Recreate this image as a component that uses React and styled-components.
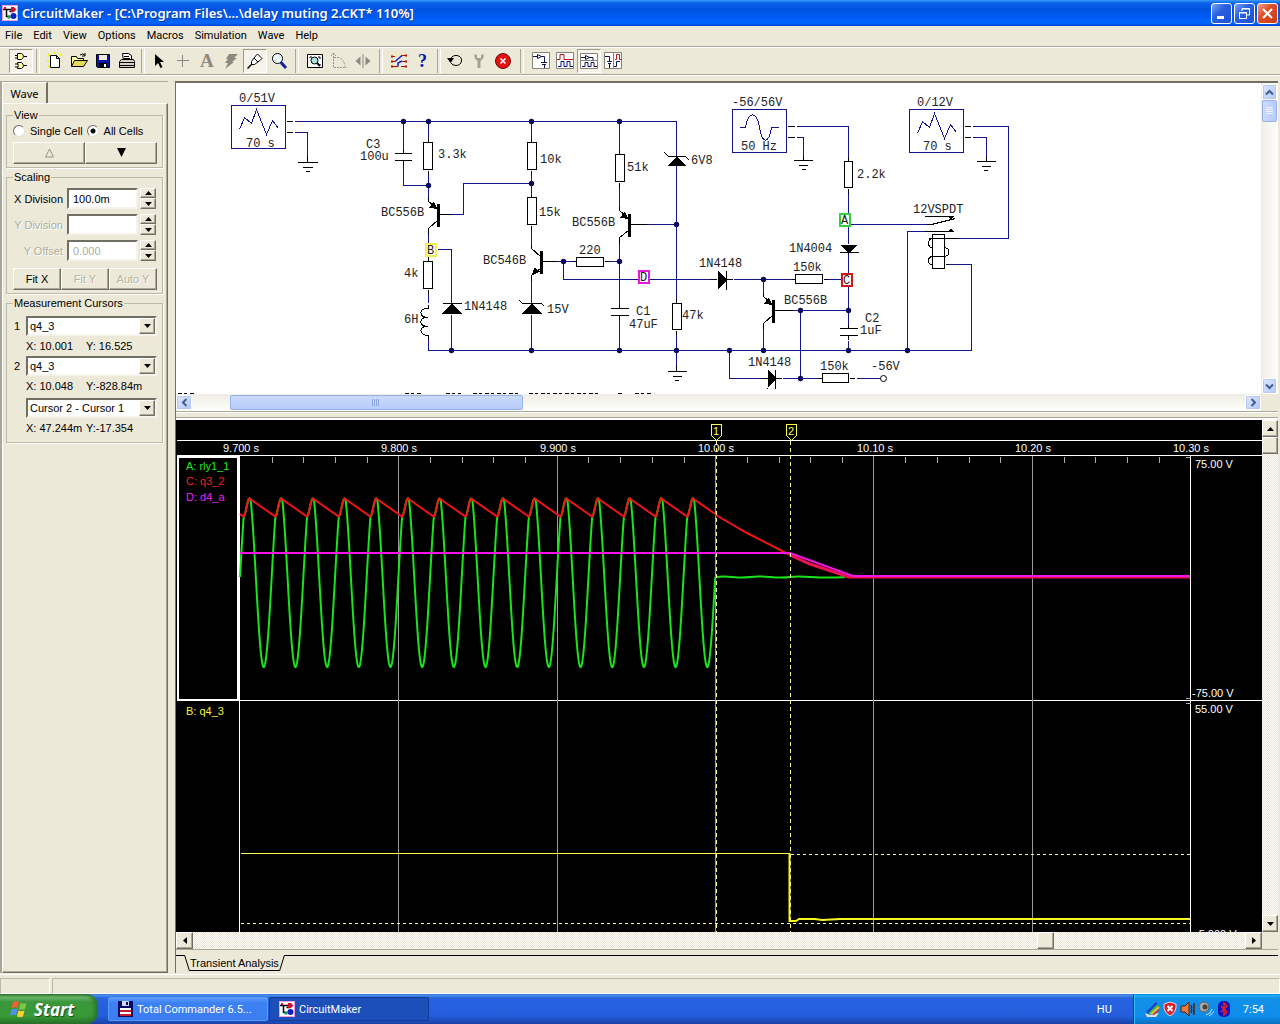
import React, { useState } from 'react';
import styled, { createGlobalStyle, css } from 'styled-components';

const GlobalStyle = createGlobalStyle`
    * {
        box-sizing: border-box;
    }
    body {
        margin: 0;
        background: #ece9d8;
        font-family: "Liberation Sans", Arial, sans-serif;
        font-size: 11px;
        color: #000;
    }
    button, input, select {
        font: inherit;
        color: inherit;
        margin: 0;
        padding: 0;
        border-radius: 0;
    }
    svg {
        display: block;
    }
`;

const titleFont = '"Noto Sans", "Open Sans", sans-serif';
const uiFont = 'Roboto, "Noto Sans", sans-serif';

const raised = css`
    border: 1px solid;
    border-color: #fff #716f64 #716f64 #fff;
    box-shadow: inset -1px -1px #aca899;
    background: #ece9d8;
`;

const Window = styled.div`
    min-height: 100vh;
    display: flex;
    flex-direction: column;
    overflow: hidden;
`;

const TitleBar = styled.header`
    height: 26px;
    display: flex;
    align-items: center;
    gap: 2px;
    padding: 0 2px 0 2px;
    background: linear-gradient(#3c9bff 0, #0a62ea 3px, #0053e1 9px, #005cf5 17px, #0066ff 23px, #0043cf 26px);
`;

const Title = styled.h1`
    flex: 1;
    margin: 0 0 0 2px;
    font-family: ${titleFont};
    font-size: 13px;
    font-weight: 600;
    line-height: 24px;
    white-space: nowrap;
    color: #fff;
    text-shadow: 1px 1px #0b3a9c;
`;

const CaptionButton = styled.button`
    width: 21px;
    height: 21px;
    display: grid;
    place-items: center;
    border: 1px solid #fff;
    border-radius: 3px;
    background: ${props => props.$close
        ? 'linear-gradient(135deg, #f0a088, #e0502a 40%, #c83c14)'
        : 'linear-gradient(135deg, #7ba6f5, #2a60e0 40%, #1c50d0)'};
`;

const MenuBar = styled.nav`
    height: 20px;
    display: flex;
    gap: 11px;
    padding-left: 5px;
    font-family: ${uiFont};
    line-height: 18px;
`;

const MenuItem = styled.button`
    border: 0;
    background: none;
    line-height: 18px;
`;

const ToolBar = styled.div`
    height: 30px;
    display: flex;
    align-items: center;
    padding-left: 9px;
    border-top: 1px solid #aca899;
    border-bottom: 1px solid #fff;
    box-shadow: inset 0 1px #fff, inset 0 -1px #aca899;
`;

const ToolButton = styled.button`
    width: 24px;
    height: 24px;
    display: grid;
    place-items: center;
    border: 1px solid transparent;
    background: none;
    ${props => props.$pressed && css`
        border-color: #9d9a8c #fff #fff #9d9a8c;
        background: #f5f3ea;
    `}
`;

const Separator = styled.span`
    width: ${props => props.$w}px;
    height: 24px;
    display: flex;
    justify-content: center;
    &::before {
        content: "";
        width: 2px;
        border-left: 1px solid #aca899;
        border-right: 1px solid #fff;
    }
`;

const Main = styled.main`
    flex: 1;
    display: flex;
    gap: 7px;
    padding: 5px 2px 1px 0;
`;

const SideBar = styled.aside`
    flex: 0 0 168px;
    min-width: 0;
    display: flex;
    flex-direction: column;
    border-top: 1px solid #aca899;
    border-left: 2px solid #aca899;
`;

const SideTab = styled.button`
    width: 46px;
    height: 21px;
    border: 0;
    border-top: 1px solid #fff;
    border-left: 1px solid #fff;
    border-right: 2px solid #716f64;
    background: none;
    font-family: ${titleFont};
`;

const SidePanel = styled.div`
    flex: 1;
    display: flex;
    flex-direction: column;
    gap: 3px;
    padding: 5px 4px 0 3px;
    border: 1px solid;
    border-color: #fff #716f64 #716f64 #fff;
    box-shadow: inset -1px -1px #aca899;
`;

const Group = styled.fieldset`
    margin: 0;
    min-width: 0;
    padding: ${props => props.$top}px 5px 4px 6px;
    border: 1px solid #bdb9a8;
    box-shadow: 1px 1px #fff;
`;

const Legend = styled.legend`
    padding: 0 1px;
    line-height: 13px;
`;

const Row = styled.div`
    display: flex;
    align-items: center;
    height: ${props => props.$h || 21}px;
    margin-bottom: ${props => props.$after || 0}px;
`;

const RadioLabel = styled.label`
    display: flex;
    align-items: center;
    gap: 5px;
    margin-right: 4px;
    white-space: nowrap;
`;

const Radio = styled.input`
    appearance: none;
    flex: none;
    width: 12px;
    height: 12px;
    border-radius: 50%;
    border: 1px solid;
    border-color: #716f64 #e4e1d2 #e4e1d2 #716f64;
    background: #fff;
    &:checked {
        background: radial-gradient(#000 2px, #fff 3px);
    }
`;

const PushButton = styled.button`
    ${raised}
    flex: 1;
    height: 22px;
    line-height: 20px;
    display: grid;
    place-items: center;
    &:disabled {
        color: #b5b2a2;
        text-shadow: 1px 1px #fff;
    }
`;

const FieldLabel = styled.label`
    width: 50px;
    margin-right: 4px;
    display: flex;
    justify-content: flex-end;
    color: ${props => (props.$off ? '#b0ad9d' : '#000')};
    text-shadow: ${props => (props.$off ? '1px 1px #fff' : 'none')};
    white-space: nowrap;
`;

const TextBox = styled.input`
    width: 71px;
    height: 21px;
    padding-left: 4px;
    border: 2px solid;
    border-color: #716f64 #f6f4ea #f6f4ea #716f64;
    background: #fff;
    &:disabled {
        color: #b0ad9d;
    }
`;

const Spin = styled.div`
    width: 16px;
    margin-left: 2px;
    display: grid;
    grid-template-rows: 10px 11px;
`;

const SpinButton = styled.button`
    ${raised}
    display: grid;
    place-items: center;
`;

const Combo = styled.div`
    flex: 1;
    height: 20px;
    display: flex;
    border: 2px solid;
    border-color: #716f64 #f6f4ea #f6f4ea #716f64;
    background: #fff;
`;

const Select = styled.select`
    appearance: none;
    flex: 1;
    min-width: 0;
    padding-left: 2px;
    border: 0;
    background: #fff;
`;

const ComboArrow = styled.span`
    ${raised}
    width: 16px;
    display: grid;
    place-items: center;
`;

const CursorNo = styled.label`
    width: 13px;
    padding-left: 1px;
`;

const Reading = styled.span`
    width: ${props => props.$w}px;
    white-space: pre;
`;

const Work = styled.section`
    flex: 1;
    min-width: 0;
    display: flex;
    flex-direction: column;
    border-left: 1px solid #716f64;
`;

const SchematicPane = styled.div`
    display: grid;
    grid-template-columns: minmax(0, 1fr) 17px;
    grid-template-rows: 311px 17px;
    border-top: 2px solid #716f64;
    border-bottom: 1px solid #aca899;
    box-shadow: 0 1px #fff;
    margin-bottom: 5px;
`;

const Sheet = styled.div`
    overflow: hidden;
    background: #fff;
`;

const XpTrack = styled.div`
    display: flex;
    flex-direction: ${props => (props.$vertical ? 'column' : 'row')};
    padding: ${props => (props.$vertical ? '1px 1px 0 1px' : '1px 0 1px 0')};
    background: ${props => (props.$vertical
        ? 'linear-gradient(90deg, #eeede5, #fefefb)'
        : 'linear-gradient(#eeede5, #fefefb)')};
`;

const XpButton = styled.button`
    flex: none;
    width: ${props => (props.$vertical ? 15 : 16)}px;
    height: ${props => (props.$vertical ? 16 : 15)}px;
    display: grid;
    place-items: center;
    border: 1px solid #fff;
    border-radius: 2px;
    outline: 1px solid #b8c8f0;
    outline-offset: -2px;
    background: linear-gradient(135deg, #dce6fe, #b4c8f8);
`;

const XpThumb = styled.div`
    flex: none;
    width: ${props => (props.$vertical ? '15px' : props.$size)};
    height: ${props => (props.$vertical ? props.$size : '15px')};
    display: grid;
    place-items: center;
    border: 1px solid #98b0e8;
    border-radius: 2px;
    background: ${props => (props.$vertical
        ? 'linear-gradient(90deg, #cad9fd, #b7ccfa)'
        : 'linear-gradient(#cad9fd, #b7ccfa)')};
`;

const Spacer = styled.div`
    flex: ${props => props.$grow || 1};
`;

const WavePane = styled.div`
    flex: 1;
    display: grid;
    grid-template-columns: minmax(0, 1fr) 16px;
    grid-template-rows: minmax(512px, 1fr) 17px;
    border-top: 1px solid #aca899;
    border-bottom: 1px solid #aca899;
    padding-top: 2px;
    box-shadow: inset 0 2px #fff;
`;

const Scope = styled.div`
    overflow: hidden;
    background: #000;
`;

const ClassicTrack = styled.div`
    display: flex;
    flex-direction: ${props => (props.$vertical ? 'column' : 'row')};
    background: repeating-conic-gradient(#e6e3d3 0 25%, #fff 0 50%) 0 0 / 2px 2px;
`;

const ClassicButton = styled.button`
    ${raised}
    flex: none;
    width: ${props => (props.$vertical ? 16 : 17)}px;
    height: 17px;
    display: grid;
    place-items: center;
`;

const TabStrip = styled.div`
    height: 23px;
    display: flex;
    padding-top: 5px;
`;

const TabLine = styled.span`
    flex: ${props => (props.$lead ? '0 0 8px' : 1)};
    border-top: 1px solid #000;
`;

const AnalysisTab = styled.button`
    height: 16px;
    border: 0;
    border-bottom: 1px solid #000;
    background: none;
    white-space: nowrap;
`;

const StatusBar = styled.footer`
    height: 20px;
    display: flex;
    gap: 2px;
    padding-top: 3px;
    border-top: 1px solid #fff;
`;

const StatusCell = styled.div`
    flex: ${props => (props.$small ? '0 0 50px' : 1)};
    border: 1px solid;
    border-color: #bdb9a8 #fff #fff #bdb9a8;
`;

const TaskBar = styled.div`
    height: 30px;
    display: flex;
    align-items: stretch;
    font-family: ${uiFont};
    color: #fff;
    background: linear-gradient(#3168d5 0, #4993e6 1px, #2663e0 4px, #245ddb 22px, #1941a5 30px);
`;

const StartButton = styled.button`
    width: 98px;
    display: flex;
    align-items: center;
    gap: 6px;
    padding-left: 10px;
    border: 0;
    border-radius: 0 12px 12px 0;
    background: linear-gradient(#2e7a2e 0, #6cb86c 3px, #3c963c 8px, #389a38 22px, #276f27 30px);
    box-shadow: inset -3px 0 4px #2a702a;
    font-family: ${titleFont};
    font-size: 17px;
    font-weight: 700;
    font-style: italic;
    text-shadow: 1px 1px 1px #1c4a1c;
`;

const Tasks = styled.div`
    flex: 1;
    display: flex;
    align-items: center;
    gap: 1px;
    padding-left: 10px;
`;

const TaskButton = styled.button`
    width: 160px;
    height: 24px;
    display: flex;
    align-items: center;
    gap: 4px;
    padding-left: 9px;
    border: 1px solid ${props => (props.$active ? '#123c94' : '#5a98f8')};
    border-radius: 2px;
    background: ${props => (props.$active ? '#1c4fb8' : 'linear-gradient(#5a9bfa, #3c81f3 5px, #3a7df0)')};
    white-space: nowrap;
`;

const Language = styled.span`
    align-self: center;
    margin-right: 21px;
`;

const Tray = styled.div`
    display: flex;
    align-items: center;
    gap: 2px;
    padding: 0 16px 0 10px;
    border-left: 1px solid #0c3c94;
    box-shadow: inset 1px 0 #2cc0f8;
    background: linear-gradient(#0c59b9 0, #19b9f3 1px, #1290e9 4px, #0d8dea 22px, #0b6fc4 30px);
`;

const Clock = styled.time`
    margin-left: 9px;
`;

/* ---------- icons ---------- */

const Icon = ({ size = 18, children }) => (
    <svg width={size} height={size} viewBox={`0 0 ${size} ${size}`} fill="none" stroke="#000" aria-hidden="true">
        {children}
    </svg>
);

const Tri = ({ d, w = 7, h = 4, fill = '#000' }) => (
    <svg width={w} height={h} aria-hidden="true"><path d={d} fill={fill} /></svg>
);

const UP = 'M0 4h7L3.5 0z';
const DOWN = 'M0 0h7L3.5 4z';

const AppIcon = () => (
    <svg width="16" height="16" viewBox="0 0 16 16" aria-hidden="true">
        <rect width="16" height="16" fill="#fff" />
        <rect x=".5" y=".5" width="15" height="15" fill="none" stroke="#f3a0d8" />
        <path d="M1 4.500h9M4.500 4v8M4.500 11.500h4M7.500 6.500h4" stroke="#000" strokeWidth="1.500" fill="none" />
        <path d="M2 2h2v2H2z" fill="#d01030" />
        <path d="M9 2h3l2.500 2.500-2.500 2.500H9z" fill="#d01030" />
        <circle cx="11.500" cy="11" r="3" fill="#1020c0" />
        <path d="M5.500 10.500h3v3h-3z" fill="#10a060" />
    </svg>
);

const icons = {
    gates: <Icon>
        <path d="M5.500 1.500h4q4 2.500 0 6h-4zM5.500 10.500q1.500 3 0 6h4q4-2.500 0-6z" fill="#ffffa8" />
        <path d="M3 3.500h2M3 6h2M12 4.500h3M3 12h3M3 15h3M12 13.500h3" />
    </Icon>,
    blank: <Icon>
        <path d="M2 2l3 3M2 15l2-2M14 3l2-1M9 0v2M1 9h2" stroke="#f5f000" strokeWidth="2" />
        <path d="M4.500 3.500h6l3 3v9h-9zM10.500 3.500v3h3" fill="#fff" />
    </Icon>,
    open: <Icon>
        <path d="M1.500 14.500v-10h5l1 2h6v3" fill="#ffffa0" />
        <path d="M1.500 14.500l3-6h13l-4 6z" fill="#e4dc58" />
        <path d="M10 3q3-2 5 0M15 1v3h-3" />
    </Icon>,
    save: <Icon>
        <path d="M2.500 2.500h13v13h-12l-1-1z" fill="#0a14a0" />
        <path d="M5 3h8v5H5z" fill="#ece9d8" stroke="none" />
        <path d="M5 11h8v4H5z" fill="#000" stroke="none" />
        <path d="M10 12h2v3h-2z" fill="#fff" stroke="none" />
    </Icon>,
    print: <Icon>
        <path d="M5.500 8.500l-1-7h6l3 2v5" fill="#fff" />
        <path d="M6 4.500h5M6 6.500h6" />
        <path d="M1.500 9.500l2-2h12l1 2v6h-15z" fill="#d6d3c4" />
        <path d="M1.500 10.500h15M1.500 13.500h15" />
    </Icon>,
    arrow: <Icon><path d="M5 2v12l3-3 2.500 5 2-1-2.500-5h4z" fill="#000" stroke="none" /></Icon>,
    plus: <Icon><path d="M8.500 3v12M3 8.500h12" stroke="#8c8a80" /></Icon>,
    text: <Icon size={22}>
        <text x="4" y="17" fontFamily="Liberation Serif" fontSize="19" fontWeight="700" fill="#8c8a80" stroke="none">A</text>
    </Icon>,
    bolt: <Icon><path d="M7 2h9l-4 4h3l-5 4h2l-9 7 3-6H3l3-4H4z" fill="#8c8a80" stroke="none" /></Icon>,
    probe: <Icon>
        <path d="M1.500 16.500l5-5" strokeWidth="1.500" />
        <path d="M5.500 12.500v-3l4.500-6 1.500-1.500 4.500 4.500-1.500 1.500-6 4.500zM8 6l4 4" fill="#fff" />
    </Icon>,
    glass: <Icon>
        <circle cx="7.500" cy="6.500" r="5" fill="#eafafa" />
        <path d="M11 10.500l5 5.500" stroke="#1020a0" strokeWidth="3" />
    </Icon>,
    fit: <Icon>
        <path d="M1.500 2.500h15v13h-15z" fill="#fff" />
        <path d="M4 6V5h2M14 12v1h-1M12 5h2v2" />
        <circle cx="8.500" cy="8.500" r="3.500" fill="#a8e4e4" />
        <path d="M11 11l3 3" strokeWidth="2" />
    </Icon>,
    rotate: <Icon>
        <path d="M3.500 1v14.500H17M4 5.500h5q5 2 6 9M1 4l2.500-3L6 4" stroke="#96948a" strokeDasharray="2 1" />
    </Icon>,
    mirror: <Icon>
        <path d="M9 2v14" stroke="#8c8a80" />
        <path d="M6.500 4.500v9l-5-4.500zM11.500 4.500v9l5-4.500z" fill="#8c8a80" stroke="none" />
    </Icon>,
    wires: <Icon>
        <path d="M2 2h14v14H2z" stroke="#f8ec80" strokeDasharray="3 2" />
        <path d="M1 4.500h4M1 9.500h4M1 14.500h7M11 3.500h6M12 9.500h5M11 14.500h6" stroke="#b01010" />
        <path d="M1 3.500h2v2H1zM1 8.500h2v2H1zM1 13.500h2v2H1zM15 2.500h2v2h-2zM15 8.500h2v2h-2zM15 13.500h2v2h-2z" fill="#b01010" stroke="none" />
        <path d="M5 9.500L12 3.500M8 14.500V11l4-2" stroke="#1020c0" strokeWidth="1.500" />
    </Icon>,
    help: <Icon size={20}>
        <text x="5" y="16" fontFamily="Liberation Serif" fontSize="18" fontWeight="700" fill="#0a14b4" stroke="none">?</text>
    </Icon>,
    undo: <Icon>
        <path d="M4.500 7q2-4 6.500-3.500 5 1 4.500 5.500-1 4.500-5.500 4.500-3.500 0-5-2.500" />
        <path d="M1 6h7l-3.500 5z" fill="#000" stroke="none" />
    </Icon>,
    wrench: <Icon>
        <path d="M4.500 2v4l3 3v7h3V9l3-3V2l-2.500 1v3H7V3z" fill="#a3a196" stroke="none" />
    </Icon>,
    stop: <Icon>
        <circle cx="9" cy="9" r="7.500" fill="#e01414" stroke="#700" />
        <path d="M6.500 6.500l5 5M11.500 6.500l-5 5" stroke="#fff" strokeWidth="1.500" />
    </Icon>,
    view1: <Icon size={20}>
        <path d="M1.500 1.500h17v16h-17z" fill="#fff" stroke="#85837a" />
        <path d="M2 5.500h4M6.500 3.500l4 2-4 2zM10 5.500h3.500v4M13.500 9v3M10 11.500h6M11 13.500h4M13.500 13v4" stroke="#101050" />
    </Icon>,
    view2: <Icon size={20}>
        <path d="M1.500 1.500h17v16h-17z" fill="#fff" stroke="#85837a" />
        <path d="M2 8.500h3v-5h4v5h9" stroke="#c01010" />
        <path d="M3 15.500h3v-5h3v5h3v-5h3v5h3" stroke="#101080" />
    </Icon>,
    view3: <Icon size={20}>
        <path d="M1.500 2.500h17v15h-17zM1.500 9.500h17" fill="#fff" stroke="#85837a" />
        <path d="M2 6.500h4M6.500 4.500l4 2-4 2zM10 6.500h4v3M3 15.500h3v-4h3v4h3v-4h3v4h3" stroke="#101050" />
    </Icon>,
    view4: <Icon size={20}>
        <path d="M1.500 1.500h17v16h-17zM10.500 1.500v16" fill="#fff" stroke="#85837a" />
        <path d="M2 5.500h4.500v5M4 10.500h5M5 12.500h3M6.500 13v4M11 15.500h2.500v-5H17" stroke="#101050" />
        <path d="M12 8.500h1.500v-5h3v5h2" stroke="#c01010" />
    </Icon>,
};

// a number is a separator of that width
const tools = [
    ['gates', 'Parts', true], 10,
    ['blank', 'New'], ['open', 'Open'], ['save', 'Save'], ['print', 'Print'], 8,
    ['arrow', 'Arrow'], ['plus', 'Wire'], ['text', 'Text'], ['bolt', 'Delete'],
    ['probe', 'Probe', true], ['glass', 'Zoom'], 12,
    ['fit', 'Fit'], ['rotate', 'Rotate'], ['mirror', 'Mirror'], 12,
    ['wires', 'Digital mode'], ['help', 'Help'], 8,
    ['undo', 'Reset'], ['wrench', 'Step'], ['stop', 'Stop'], 14,
    ['view1', 'Schematic'], ['view2', 'Waves'], ['view3', 'Split horizontally', true], ['view4', 'Split vertically'],
];

/* ---------- schematic ---------- */

const SheetText = styled.text`
    font-family: "Courier New", "Liberation Mono", monospace;
    font-size: 12px;
    fill: #222;
`;

const wires = [
    'M294 121H676V303M294 132H307V160',
    'M403 121V149M403 164V185H428',
    'M428 121V140M428 172V198M428 232V262M428 290V302M428 338V350H971V264H948',
    'M437 249H451V302M451 314V350',
    'M442 214H463V183H531M531 121V140M531 172V196M531 226V246M531 276V302M531 314V350',
    'M555 261H576M604 261H619M563 261V279H716',
    'M619 121V152M619 184V210M619 240V304M619 318V350M645 224H676',
    'M676 330V368M733 279H795M823 279H841',
    'M763 279V296M763 324V350M790 310H848M800 310V378',
    'M729 350V378H764M782 378H820M856 378H880',
    'M796 126H848V160M848 188V243M848 253V324M848 340V350M796 137H803V158',
    'M850 224H926M907 350V231H924M972 126H1008V238H954M972 137H986V158',
].join('');

const leads = [
    'M286 121H292M286 132H292M787 126H794M787 137H794M964 126H970M964 137H970',
    'M307 155V162M297 162H317M302 167H312M305 171H309',
    'M803 155V160M793 160H812M798 165H807M801 169H805',
    'M986 155V161M976 161H995M981 166H990M983 170H987',
    'M676 364V371M667 371H686M672 376H681M674 380H678',
    'M394 153H411M394 160H411M403 149V153M403 160V164',
    'M610 308H628M610 315H628M619 304V308M619 315V319',
    'M839 328H857M839 335H857M848 324V328M848 335V339',
    'M428 138V142M428 170V174M428 196V201L437 208M437 220L428 228V234M439 214H450',
    'M531 138V142M531 170V174M531 194V197M531 225V229M531 244V248L540 256M540 268L531 275V280M542 261H556',
    'M619 150V154M619 182V187M619 206V210L628 218M628 230L619 237V243M630 224H646',
    'M763 292V296L772 304M772 315L763 323V328M774 310H792',
    'M428 256V261M428 289V293M428 304V308C418 307 418 317 427 317C418 316 418 326 427 326C418 325 418 335 428 335V339',
    'M442 303H461M519 300L522 303H541L544 306M664 152L668 156H685L689 160',
    'M726 270V289M775 369V388M839 252H858M726 279H732M776 378H781M716 279H710M767 378H760',
    'M676 298V303M676 330V334M848 156V161M848 188V193M572 261H576M604 261H608M791 279H795M823 279H827M818 378H822M849 378H854',
    'M924 216H953M926 224H931L955 218M924 231H952M928 238H956M932 256H944M945 264H948',
    'M932 238C927 238 927 247 931 247M932 256C927 256 927 264 931 264M944 247C950 248 950 255 944 256',
].join('');

const resistors = [
    [423, 142, 9, 27], [527, 142, 9, 27], [527, 197, 9, 27], [423, 261, 9, 27],
    [615, 154, 9, 27], [672, 303, 9, 26], [844, 161, 8, 26],
    [576, 257, 27, 9], [795, 274, 27, 9], [822, 373, 26, 9],
];

const solids = [
    'M451 303L461 313H442Z', 'M531 303L541 313H522Z', 'M676 156L686 165H667Z',
    'M848 253L839 244H858Z', 'M727 279L717 270V289Z', 'M776 378L767 369V388Z',
    'M437 209L429 207L433 201Z', 'M628 219L620 217L624 211Z', 'M772 305L764 303L768 297Z',
    'M531 275L534 267L539 271Z', 'M947 231L950 228L953 231Z', 'M947 216H953L950 219Z',
    'M436 203H439V226H436ZM539 250H542V273H539ZM627 213H630V236H627ZM771 299H774V322H771Z',
].join('');

const nodes = [
    [403, 121], [428, 121], [531, 121], [619, 121], [428, 185], [531, 183], [563, 261], [619, 261],
    [676, 224], [763, 279], [800, 310], [848, 310], [451, 350], [531, 350], [619, 350], [676, 350],
    [729, 350], [763, 350], [848, 350], [907, 350], [800, 378],
];

const labels = [
    [239, 102, '0/51V'], [246, 147, '70 s'], [366, 148, 'C3'], [360, 160, '100u'], [438, 158, '3.3k'],
    [381, 216, 'BC556B'], [404, 277, '4k'], [404, 323, '6H'], [464, 310, '1N4148'],
    [540, 163, '10k'], [539, 216, '15k'], [483, 264, 'BC546B'], [547, 313, '15V'], [579, 254, '220'],
    [627, 171, '51k'], [572, 226, 'BC556B'], [636, 315, 'C1'], [629, 328, '47uF'], [691, 164, '6V8'],
    [682, 319, '47k'], [699, 267, '1N4148'], [793, 271, '150k'], [784, 304, 'BC556B'],
    [748, 366, '1N4148'], [820, 370, '150k'], [871, 370, '-56V'], [865, 322, 'C2'], [860, 334, '1uF'],
    [732, 106, '-56/56V'], [741, 150, '50 Hz'], [857, 178, '2.2k'], [789, 252, '1N4004'],
    [917, 106, '0/12V'], [923, 150, '70 s'], [913, 213, '12VSPDT'],
];

const probes = [
    ['A', 839, 213, '#30d040'], ['B', 425, 243, '#f4f050'], ['C', 841, 273, '#d01818'], ['D', 638, 270, '#e818e0'],
];

const Schematic = () => (
    <svg width="1085" height="311" viewBox="176 83 1085 311" fill="none">
        <g transform="translate(.5 .5)" shapeRendering="crispEdges">
            <path d={wires} stroke="#14148c" />
            <path d={leads} stroke="#000" />
            <g stroke="#14148c">
                <rect x="231" y="105" width="54" height="43" />
                <rect x="732" y="109" width="54" height="43" />
                <rect x="909" y="109" width="54" height="43" />
                <path d="M239 129L244 117L251 123L256 109L266 134L272 120L278 128" />
                <path d="M917 133L922 121L929 127L934 113L944 138L950 124L956 132" />
                <path d="M739 127H745C748 110 756 110 759 127C762 144 768 144 771 127H778" />
            </g>
            {resistors.map(([x, y, w, h]) => (
                <rect key={`${x}-${y}`} x={x} y={y} width={w} height={h} fill="#fff" stroke="#000" />
            ))}
            <rect x="932" y="234" width="12" height="34" stroke="#000" />
            <path d={solids} fill="#000" />
            <circle cx="883" cy="378" r="3" stroke="#000" fill="#fff" shapeRendering="auto" />
            <path d="M177 393H194M404 393H421M445 393H460M472 393H518M528 393H600M617 393H622M634 393H652" stroke="#000" strokeDasharray="4 2 3 3" />
        </g>
        {nodes.map(([x, y]) => (
            <circle key={`${x}-${y}`} cx={x + 0.5} cy={y + 0.5} r="2.700" fill="#0c0c58" />
        ))}
        {labels.map(([x, y, text]) => (
            <SheetText key={`${x}-${y}`} x={x} y={y}>{text}</SheetText>
        ))}
        {probes.map(([name, x, y, color]) => (
            <g key={name}>
                <rect x={x + 1} y={y + 1} width="10" height="12" fill="#fff" stroke={color} strokeWidth="2" />
                <SheetText x={x + 2} y={y + 11}>{name}</SheetText>
            </g>
        ))}
    </svg>
);

/* ---------- scope ---------- */

const ScopeText = styled.text`
    font-family: "Liberation Sans", Arial, sans-serif;
    font-size: 11px;
    fill: ${props => props.$color || '#fff'};
    text-anchor: ${props => (props.$center ? 'middle' : 'start')};
`;

const LEFT = 240;
const DIV = 158.4;
const PERIOD = DIV / 5;

// the capacitor charges from 3.5 to 9.5 px of every mains period
const mains = p => 577 - 90 * Math.sin((p / PERIOD) * Math.PI * 2);
const level = p => {
    if (p >= 3.5 && p < 9.5) {
        return 507.5 + 9 * Math.cos(((p - 3.5) / 6) * Math.PI);
    }
    return 498.5 + (p < 3.5 ? p + PERIOD - 9.5 : p - 9.5) * 0.7;
};

const tracePoints = () => {
    const green = [];
    const red = [];
    for (let x = 0; x <= PERIOD * 15; x += 0.5) {
        const p = x % PERIOD;
        green.push(`${LEFT + x},${Math.max(mains(p), level(p)).toFixed(1)}`);
        red.push(`${LEFT + x},${level(p).toFixed(1)}`);
    }
    green.push('715.5,577');
    return { green: green.join(' '), red: red.join(' ') };
};

const { green, red } = tracePoints();
const times = ['9.700 s', '9.800 s', '9.900 s', '10.00 s', '10.10 s', '10.20 s', '10.30 s'];
const ticks = Array.from({ length: 30 }, (_, i) => Math.round(LEFT + i * PERIOD)).filter((_, i) => i % 5);

const Waves = () => (
    <svg width="1086" height="512" viewBox="176 420 1086 512" fill="none">
        <g transform="translate(.5 .5)" shapeRendering="crispEdges">
            <path d="M176 440H1262M176 455H1262M176 700H1262M239 455V932M1190 455V932" stroke="#fff" />
            <path d="M398 455V932M557 455V932M715 455V932M873 455V932M1032 455V932" stroke="#9a9a9a" />
            <path d={ticks.map(x => `M${x} 456V462`).join('') + 'M1185 457H1190M1185 698H1190M1185 703H1190'} stroke="#aaa" />
        </g>
        <rect x="178" y="457" width="60" height="243" stroke="#fff" strokeWidth="2" />
        <polyline points={green} stroke="#18e41c" strokeWidth="2" />
        <path d="M715.500 577C730 575 735 579 750 577C765 575 775 579 790 577C805 575 815 579 845 577" stroke="#18e41c" strokeWidth="2" />
        <polyline points={red} stroke="#f01414" strokeWidth="2" />
        <path d="M715 514.500L747 533L789 554.500L810 564L849 577" stroke="#f01414" strokeWidth="2" />
        <path d="M790 555L810 564L849 577H1190" stroke="#e81450" strokeWidth="3" />
        <path d="M240 553H790L853 576H1190" stroke="#f414e8" strokeWidth="2" />
        <g transform="translate(.5 .5)" shapeRendering="crispEdges" stroke="#ffff50">
            <path d="M716 440V932M790 440V932" stroke="#ffff90" strokeDasharray="4 3" />
            <path d="M240 923H1190M790 854H1190" stroke="#ffff90" strokeDasharray="3 3" />
            <path d="M240 853H789" />
            <path d="M711 424H721V435L716 440L711 435ZM786 424H796V435L791 440L786 435Z" />
        </g>
        <path d="M789.500 853V921H796L799 919H815L822 920L840 919H1190" stroke="#f6f620" strokeWidth="2" />
        <ScopeText x="716" y="435" $center $color="#ffff50">1</ScopeText>
        <ScopeText x="791" y="435" $center $color="#ffff50">2</ScopeText>
        {times.map((t, i) => (
            <ScopeText key={t} x={Math.round(LEFT + 1 + i * DIV)} y="452" $center>{t}</ScopeText>
        ))}
        <ScopeText x="186" y="470" $color="#20e828">A: rly1_1</ScopeText>
        <ScopeText x="186" y="485" $color="#f02020">C: q3_2</ScopeText>
        <ScopeText x="186" y="501" $color="#f020f0">D: d4_a</ScopeText>
        <ScopeText x="186" y="715" $color="#f4f440">B: q4_3</ScopeText>
        <ScopeText x="1195" y="468">75.00 V</ScopeText>
        <ScopeText x="1192" y="697">-75.00 V</ScopeText>
        <ScopeText x="1195" y="713">55.00 V</ScopeText>
        <ScopeText x="1195" y="938">-5.000 V</ScopeText>
    </svg>
);

/* ---------- side bar ---------- */

const Spinner = ({ name }) => (
    <Spin>
        <SpinButton aria-label={`${name} up`}><Tri d={UP} /></SpinButton>
        <SpinButton aria-label={`${name} down`}><Tri d={DOWN} /></SpinButton>
    </Spin>
);

const Field = ({ id, label, value, off, after }) => (
    <Row $after={after}>
        <FieldLabel htmlFor={id} $off={off}>{label}</FieldLabel>
        <TextBox id={id} defaultValue={value} disabled={off} />
        <Spinner name={label} />
    </Row>
);

const CursorRow = ({ id, no, value, x, y, after }) => (
    <>
        <Row $h={20}>
            <CursorNo htmlFor={id} aria-label={no ? undefined : 'Difference'}>{no}</CursorNo>
            <Combo>
                <Select id={id} defaultValue={value}><option>{value}</option></Select>
                <ComboArrow><Tri d={DOWN} /></ComboArrow>
            </Combo>
        </Row>
        <Row $h={20} $after={after}>
            <Reading $w={13} />
            <Reading $w={60}>{x}</Reading>
            <Reading>{y}</Reading>
        </Row>
    </>
);

const WavePanel = () => {
    const [cells, setCells] = useState('all');

    return (
        <SideBar>
            <SideTab>Wave</SideTab>
            <SidePanel>
                <Group $top={2}>
                    <Legend>View</Legend>
                    <Row $h={14} $after={4}>
                        <RadioLabel>
                            <Radio type="radio" name="cells" checked={cells === 'single'} onChange={() => setCells('single')} />
                            Single Cell
                        </RadioLabel>
                        <RadioLabel>
                            <Radio type="radio" name="cells" checked={cells === 'all'} onChange={() => setCells('all')} />
                            All Cells
                        </RadioLabel>
                    </Row>
                    <Row>
                        <PushButton aria-label="Previous cell">
                            <svg width="11" height="10"><path d="M1.500 9h8l-4-8z" fill="none" stroke="#96948a" /></svg>
                        </PushButton>
                        <PushButton aria-label="Next cell">
                            <Tri w={9} h={9} d="M0 0h9L4.500 9z" />
                        </PushButton>
                    </Row>
                </Group>
                <Group $top={4}>
                    <Legend>Scaling</Legend>
                    <Field id="xdiv" label="X Division" value="100.0m" after={5} />
                    <Field id="ydiv" label="Y Division" value="" off after={5} />
                    <Field id="yoff" label="Y Offset" value="0.000" off after={7} />
                    <Row>
                        <PushButton>Fit X</PushButton>
                        <PushButton disabled>Fit Y</PushButton>
                        <PushButton disabled>Auto Y</PushButton>
                    </Row>
                </Group>
                <Group $top={6}>
                    <Legend>Measurement Cursors</Legend>
                    <CursorRow id="cur1" no="1" value="q4_3" x="X: 10.001" y="Y: 16.525" />
                    <CursorRow id="cur2" no="2" value="q4_3" x="X: 10.048" y="Y:-828.84m" after={2} />
                    <CursorRow id="diff" value="Cursor 2 - Cursor 1" x="X: 47.244m" y="Y:-17.354" />
                </Group>
            </SidePanel>
        </SideBar>
    );
};

const Chevron = ({ d }) => (
    <svg width="9" height="9" viewBox="0 0 9 9" fill="none" stroke="#41608c" strokeWidth="2"><path d={d} /></svg>
);

const App = () => (
    <>
        <GlobalStyle />
        <Window>
            <TitleBar>
                <AppIcon />
                <Title>CircuitMaker - [C:\Program Files\...\delay muting 2.CKT* 110%]</Title>
                <CaptionButton aria-label="Minimize">
                    <svg width="13" height="13"><path d="M2 9h7v3H2z" fill="#fff" /></svg>
                </CaptionButton>
                <CaptionButton aria-label="Restore">
                    <svg width="13" height="13" fill="none" stroke="#fff"><path d="M4 4V1.500h7.500V8H9M4 2h8M1.500 5.500h7v6h-7zM1 6h8" /></svg>
                </CaptionButton>
                <CaptionButton $close aria-label="Close">
                    <svg width="13" height="13" stroke="#fff" strokeWidth="2"><path d="M2 2l9 9M11 2l-9 9" /></svg>
                </CaptionButton>
            </TitleBar>
            <MenuBar>
                {['File', 'Edit', 'View', 'Options', 'Macros', 'Simulation', 'Wave', 'Help'].map(item => (
                    <MenuItem key={item}>{item}</MenuItem>
                ))}
            </MenuBar>
            <ToolBar>
                {tools.map((tool, i) =>
                    typeof tool === 'number'
                        ? <Separator key={i} $w={tool} />
                        : (
                            <ToolButton key={i} aria-label={tool[1]} $pressed={tool[2]}>
                                {icons[tool[0]]}
                            </ToolButton>
                        )
                )}
            </ToolBar>
            <Main>
                <WavePanel />
                <Work>
                    <SchematicPane>
                        <Sheet><Schematic /></Sheet>
                        <XpTrack $vertical>
                            <XpButton $vertical aria-label="Scroll up"><Chevron d="M1 6.500L4.500 3L8 6.500" /></XpButton>
                            <XpThumb $vertical $size="22px">
                                <svg width="7" height="8" stroke="#eef4fe"><path d="M0 .5h7M0 2.500h7M0 4.500h7M0 6.500h7" /></svg>
                            </XpThumb>
                            <Spacer />
                            <XpButton $vertical aria-label="Scroll down"><Chevron d="M1 2.500L4.500 6L8 2.500" /></XpButton>
                        </XpTrack>
                        <XpTrack>
                            <XpButton aria-label="Scroll left"><Chevron d="M6.500 1L3 4.500L6.500 8" /></XpButton>
                            <Spacer $grow={5} />
                            <XpThumb $size="27%">
                                <svg width="8" height="7" stroke="#8ca8e0"><path d="M.5 0v7M2.500 0v7M4.500 0v7M6.500 0v7" /></svg>
                            </XpThumb>
                            <Spacer $grow={95} />
                            <XpButton aria-label="Scroll right"><Chevron d="M2.500 1L6 4.500L2.500 8" /></XpButton>
                        </XpTrack>
                    </SchematicPane>
                    <WavePane>
                        <Scope><Waves /></Scope>
                        <ClassicTrack $vertical>
                            <ClassicButton $vertical aria-label="Wave up"><Tri d={UP} /></ClassicButton>
                            <ClassicButton $vertical as="div" />
                            <Spacer />
                            <ClassicButton $vertical aria-label="Wave down"><Tri d={DOWN} /></ClassicButton>
                        </ClassicTrack>
                        <ClassicTrack>
                            <ClassicButton aria-label="Wave left"><Tri w={4} h={7} d="M4 0v7L0 3.500z" /></ClassicButton>
                            <Spacer $grow={815} />
                            <ClassicButton as="div" />
                            <Spacer $grow={185} />
                            <ClassicButton aria-label="Wave right"><Tri w={4} h={7} d="M0 0v7L4 3.500z" /></ClassicButton>
                        </ClassicTrack>
                    </WavePane>
                    <TabStrip>
                        <TabLine $lead />
                        <svg width="6" height="16" stroke="#000"><path d="M.5 0L5.500 16" /></svg>
                        <AnalysisTab>Transient Analysis</AnalysisTab>
                        <svg width="6" height="16" stroke="#000"><path d="M5.500 0L.5 16" /></svg>
                        <TabLine />
                    </TabStrip>
                </Work>
            </Main>
            <StatusBar>
                <StatusCell $small />
                <StatusCell />
            </StatusBar>
            <TaskBar>
                <StartButton>
                    <svg width="18" height="18" viewBox="0 0 18 18" aria-hidden="true">
                        <path d="M3 2q3-1.500 6 0L7.500 8q-3-1.500-6 0z" fill="#f06030" />
                        <path d="M10.500 3q3 1.500 6 0L15 9q-3 1.500-6 0z" fill="#80c840" />
                        <path d="M1.500 9.500q3-1.500 6 0L6 15.500q-3-1.500-6 0z" fill="#5090f0" />
                        <path d="M8.500 10.500q3 1.500 6 0l-1.500 6q-3 1.500-6 0z" fill="#f8d030" />
                    </svg>
                    Start
                </StartButton>
                <Tasks>
                    <TaskButton>
                        <svg width="15" height="16" aria-hidden="true">
                            <path d="M0 0h15v16H0z" fill="#0a0a60" />
                            <path d="M4 0h7v5H4z" fill="#d0d8f0" />
                            <path d="M8 1h2v3H8z" fill="#0a0a60" />
                            <path d="M2 7h11v8H2z" fill="#fff" />
                            <path d="M2 9h11v2H2zM2 13h11v2H2z" fill="#c02030" />
                        </svg>
                        Total Commander 6.5...
                    </TaskButton>
                    <TaskButton $active><AppIcon />CircuitMaker</TaskButton>
                </Tasks>
                <Language>HU</Language>
                <Tray>
                    <svg width="16" height="16" aria-hidden="true">
                        <path d="M1 12l5 2 9-2-3 4H3z" fill="#ddd" />
                        <path d="M3 12L13 2" stroke="#2040d0" strokeWidth="3" />
                        <path d="M5 13l9-9" stroke="#30c040" strokeWidth="2" />
                        <path d="M7 13l8-7" stroke="#f0c020" strokeWidth="2" />
                        <path d="M9 14l6-5" stroke="#e03020" strokeWidth="1.500" />
                    </svg>
                    <svg width="16" height="16" aria-hidden="true">
                        <path d="M8 1l6 2q1 8-6 12Q1 11 2 3z" fill="#d82030" stroke="#f0d0d0" />
                        <path d="M5.500 5l5 5M10.500 5l-5 5" stroke="#fff" strokeWidth="2" />
                    </svg>
                    <svg width="16" height="16" aria-hidden="true">
                        <path d="M1 5h4l4-4v14l-4-4H1z" fill="#f07838" stroke="#502010" />
                        <path d="M11.500 4v8M14 2v12" stroke="#502010" strokeWidth="1.500" />
                    </svg>
                    <svg width="16" height="16" aria-hidden="true">
                        <circle cx="6" cy="6" r="5" fill="#a8a8a8" stroke="#606060" />
                        <circle cx="7" cy="6" r="2.500" fill="#444" />
                        <path d="M8 14q5-1 6-6M11 15q4-2 5-5" fill="none" stroke="#c0d8f8" />
                    </svg>
                    <svg width="16" height="16" aria-hidden="true">
                        <rect x="2" y="0" width="12" height="16" rx="5" fill="#1414b8" />
                        <path d="M5 5l6 6-3 3V2l3 3-6 6" fill="none" stroke="#e02030" strokeWidth="1.500" />
                    </svg>
                    <Clock>7:54</Clock>
                </Tray>
            </TaskBar>
        </Window>
    </>
);

export default App;
